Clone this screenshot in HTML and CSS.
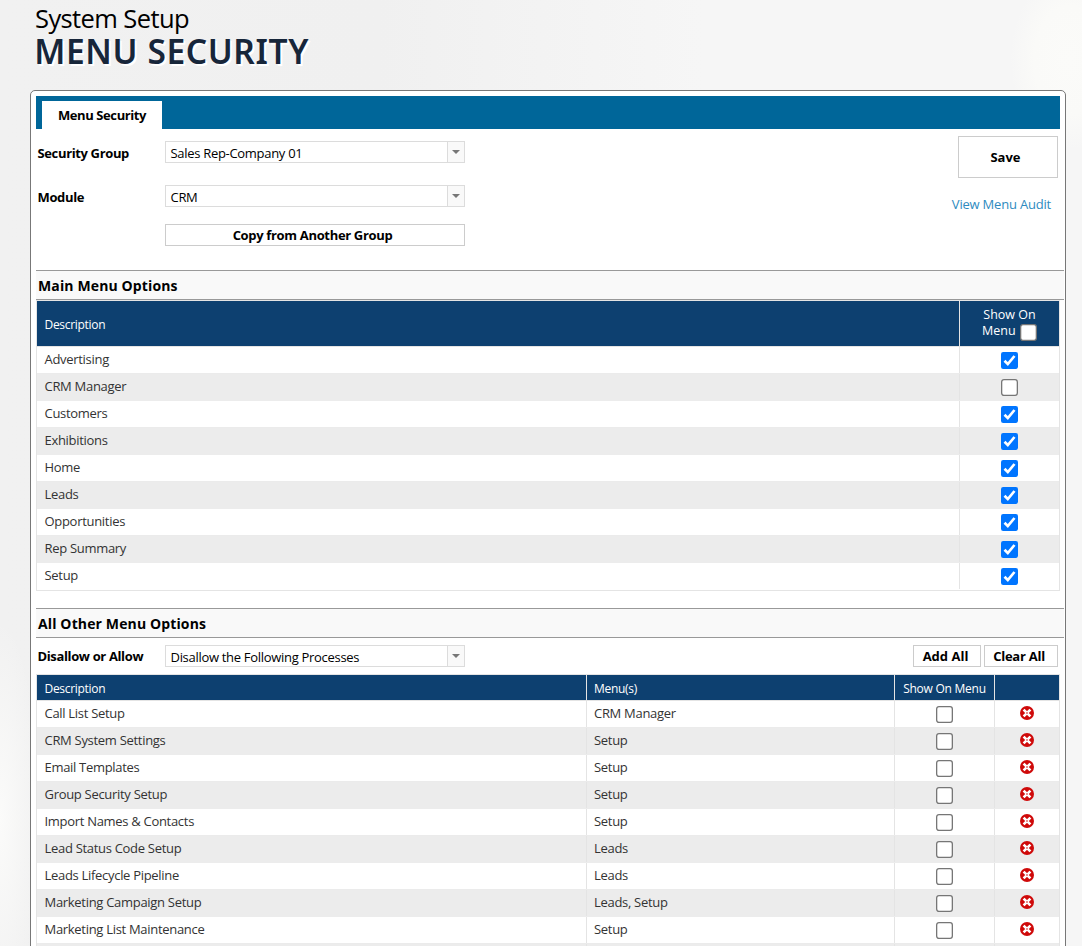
FILE: index.html
```
<!DOCTYPE html>
<html lang="en">
<head>
<meta charset="utf-8">
<title>Menu Security</title>
<link rel="stylesheet" href="styles.css">
</head>
<body>
<svg class="defs" aria-hidden="true">
  <symbol id="tick" viewBox="0 0 17 17"><rect width="17" height="17" rx="2.2" fill="#0075ff"/><path d="M3.5 8.8 6.8 12 13.5 4" fill="none" stroke="#fff" stroke-width="2.7"/></symbol>
  <symbol id="box" viewBox="0 0 17 17"><rect x=".65" y=".65" width="15.7" height="15.7" rx="2.3" fill="#fff" stroke="#767676" stroke-width="1.3"/></symbol>
  <symbol id="remove" viewBox="0 0 14 14"><circle cx="7" cy="7" r="7" fill="#cf0a0a"/><path d="M3.6 3.6 10.4 10.4M10.4 3.6 3.6 10.4" stroke="#fff" stroke-width="2.7"/><circle cx="7" cy="7" r=".8" fill="#cf0a0a"/></symbol>
</svg>
<header class="title"><div class="area">System Setup</div><h1>MENU SECURITY</h1></header>
<main class="panel">
  <nav class="tabs"><div class="tab">Menu Security</div></nav>
  <section class="form">
    <div class="fields">
      <div class="field first"><label>Security Group</label><div class="select"><span>Sales Rep-Company 01</span><i></i></div></div>
      <div class="field second"><label>Module</label><div class="select"><span>CRM</span><i></i></div></div>
      <button class="copy">Copy from Another Group</button>
    </div>
    <div class="side"><button class="save">Save</button><a class="audit">View Menu Audit</a></div>
  </section>
  <h2>Main Menu Options</h2>
  <div class="grid main" id="main"><div class="row head"><div>Description</div><div class="c">Show On<br>Menu <svg class="cb"><use href="#box"/></svg></div></div></div>
  <h2 class="other">All Other Menu Options</h2>
  <section class="filter"><label>Disallow or Allow</label><div class="select"><span>Disallow the Following Processes</span><i></i></div><button class="add">Add All</button><button class="clear">Clear All</button></section>
  <div class="grid others" id="others"><div class="row head"><div>Description</div><div>Menu(s)</div><div class="c">Show On Menu</div><div></div></div></div>
</main>
<script src="app.js"></script>
</body>
</html>
```
FILE: styles.css
```
*{box-sizing:border-box}
html,body{height:100%}
body{margin:0;overflow:hidden;color:#000;font:13px/18px "Open Sans","Noto Sans",sans-serif;letter-spacing:-.3px;background:radial-gradient(ellipse 60px 90px at 1070px 60px,#fbfbf9 0,#fafaf8 60%,transparent 100%),radial-gradient(ellipse 40px 200px at 0 820px,#fbfbfa,transparent),linear-gradient(90deg,#f1f1f1 0,#f0f0f0 35%,#f6f6f6 65%,#f6f6f6 100%)}
.defs{position:absolute;width:0;height:0}
.title{height:90px;padding:0 0 0 35px;white-space:nowrap}
.area{font-size:25.5px;line-height:36px;height:34px;letter-spacing:-.6px}
h1{margin:0;font-size:33.5px;line-height:34px;font-weight:600;letter-spacing:.6px;text-indent:-.7px;color:#17263a;text-shadow:2px 2px 0 #fff;font-family:"Noto Sans",sans-serif}
.panel{margin-left:30px;width:1036px;height:900px;border:1px solid #777;border-radius:5px;background:#fff;padding:5px 0 0 5px;overflow:hidden}
.tabs{width:1024px;height:33px;background:#069;padding:5px 0 0 6px}
.tab{width:120px;height:28px;background:#fff;text-align:center;font-weight:700;line-height:28px;letter-spacing:-.4px}
.form{height:141px;display:flex;justify-content:space-between;padding-right:7px}
.field{display:flex;align-items:center;height:22px}
.first{margin-top:12px}
.second{margin-top:22px}
label{width:129px;padding:2px 0 0 1.5px;font-weight:700;letter-spacing:-.36px;white-space:nowrap}
.select{width:300px;height:22px;border:1px solid #dcdcdc;display:flex;justify-content:space-between;padding-left:4.5px;line-height:22px;background:#fff;white-space:nowrap}
.select i{width:17px;border-left:1px solid #dcdcdc;background:#f9f9f9;position:relative}
.select i::after{content:"";position:absolute;left:4px;top:8px;border:solid transparent;border-width:4px 4px 0;border-top-color:#777}
button{display:block;padding:0;height:22px;border:1px solid #ccc;background:#fff;color:#000;font:700 13px/20px "Open Sans",sans-serif;letter-spacing:-.33px;white-space:nowrap}
.copy{width:300px;margin:17px 0 0 129px;padding-right:5px}
.side{display:flex;flex-direction:column;align-items:flex-end;padding-top:7px}
.save{width:100px;height:42px;padding-right:5px;letter-spacing:0}
.audit{color:#2e8bc0;margin:17px 7px 0 0;letter-spacing:-.2px;white-space:nowrap}
h2{margin:0;width:1028px;height:30px;border:solid #999;border-width:1px 0;background:#f9f9f9;padding-left:2px;font-size:14px;line-height:29px;letter-spacing:.13px}
.other{margin-top:17px}
.filter{display:flex;height:36px;padding:7px 7px 0 0}
.filter label{padding-top:2px}
.filter .select{line-height:23px}
.add{width:68px;margin-left:auto;padding-right:3px;letter-spacing:0}
.clear{width:74px;margin-left:3px;padding-right:4px;letter-spacing:-.25px}
.grid{width:1024px;border:1px solid #e4e4e4}
.row{display:grid;height:27px;border-bottom:1px solid #ebebeb;color:#333;line-height:25px}
.main .row{grid-template-columns:922px 100px}
.others .row{grid-template-columns:549px 308px 100px 65px}
.row:nth-child(odd){background:#ececec;border-color:#ececec}
.row:last-child{border-color:#fff}
.row>div{padding-left:7.5px;white-space:nowrap}
.row>div+div{border-left:1px solid #e4e4e4;padding-left:7px}
.row>.c{padding:0;text-align:center}
.row.head{background:#0d4070;color:#fff;font-size:12px;border-color:#e4e4e4}
.main .head{height:46px;line-height:47px}
.main .head .c{font-size:12.5px;letter-spacing:0;line-height:16px;padding-top:6px}
.others .head{height:26px;line-height:27px}
.others .head .c{letter-spacing:-.25px}
.cb{width:17px;height:17px;display:inline-block}
.main .head .cb{margin:0 0 -6px 1px;vertical-align:baseline}
.row:not(.head) .cb{display:block;margin:5px auto 0;position:relative;left:-.5px}
.row>div:has(.rm){padding-left:0}
.rm{display:block;width:14px;height:14px;margin:5px auto 0}
```
FILE: app.js
```
const svg = (name, cls) => `<svg class="${cls}"><use href="#${name}"/></svg>`;
const mainItems = ["Advertising", "CRM Manager", "Customers", "Exhibitions", "Home", "Leads", "Opportunities", "Rep Summary", "Setup"];
document.getElementById("main").insertAdjacentHTML("beforeend", mainItems.map(t =>
  `<div class="row"><div>${t}</div><div class="c">${svg(t === "CRM Manager" ? "box" : "tick", "cb")}</div></div>`).join(""));
const others = [["Call List Setup", "CRM Manager"], ["CRM System Settings", "Setup"], ["Email Templates", "Setup"], ["Group Security Setup", "Setup"], ["Import Names &amp; Contacts", "Setup"], ["Lead Status Code Setup", "Leads"], ["Leads Lifecycle Pipeline", "Leads"], ["Marketing Campaign Setup", "Leads, Setup"], ["Marketing List Maintenance", "Setup"], ["", ""]];
document.getElementById("others").insertAdjacentHTML("beforeend", others.map(([t, m]) =>
  `<div class="row"><div>${t}</div><div>${m}</div><div class="c">${svg("box", "cb")}</div><div>${svg("remove", "rm")}</div></div>`).join(""));
```
